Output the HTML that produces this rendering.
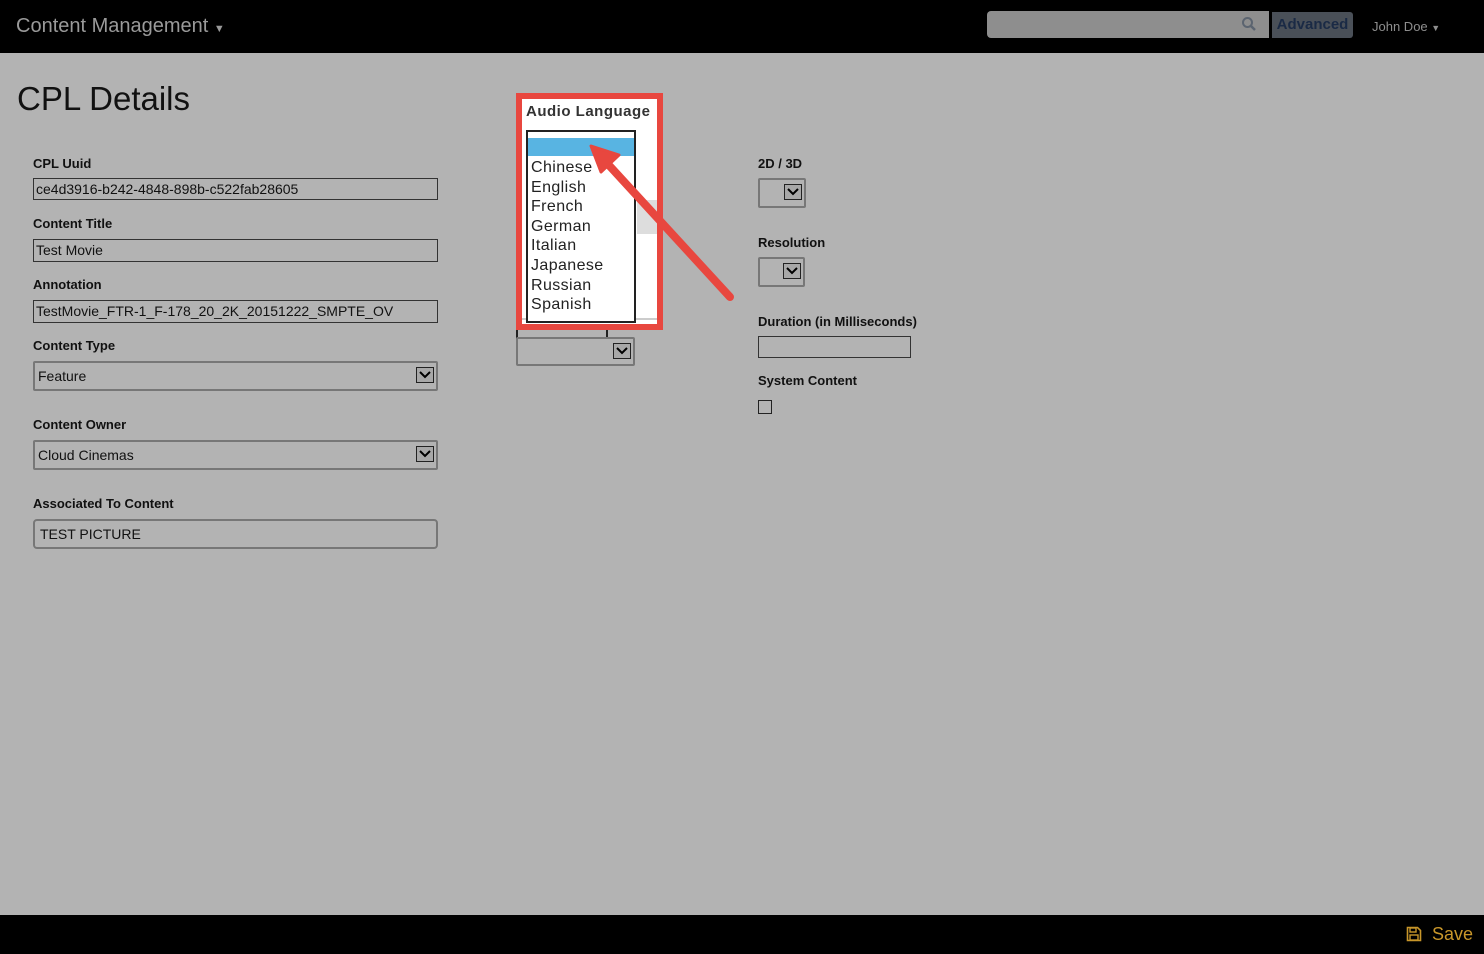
<!DOCTYPE html><html><head><style>
body{margin:0;width:1484px;height:954px;background:#b3b3b3;font-family:"Liberation Sans",sans-serif;position:relative;overflow:hidden}
.a{position:absolute}
.lbl{position:absolute;font-size:13px;font-weight:bold;color:#111}
.inp{position:absolute;border:1px solid #333;background:#b3b3b3;font-size:14px;line-height:20px;padding-left:2px;box-sizing:border-box;color:#111}
.sel{position:absolute;border:2px solid #777;border-radius:2px;background:#b3b3b3;font-size:14px;box-sizing:border-box;color:#111;padding-left:3px}
.dd{position:absolute;right:2px;top:50%;margin-top:-9px;width:18px;height:16px;border:1px solid #222;background:#a8a8a8;box-sizing:border-box}
.dd svg{position:absolute;left:2px;top:2px}
</style></head><body>
<div class="a" style="left:0;top:0;width:1484px;height:53px;background:#000"></div>
<div class="a" style="left:16px;top:15px;color:#9a9a9a;font-size:20px">Content Management <span style="font-size:11px">▼</span></div>
<div class="a" style="left:987px;top:11px;width:282px;height:27px;background:#8e8e8e;border-radius:4px 0 0 4px"></div>
<svg class="a" style="left:1241px;top:16px" width="16" height="16"><circle cx="6.5" cy="6.5" r="4.5" stroke="#5b6470" stroke-width="2" fill="none"/><path d="M10 10l4 4" stroke="#5b6470" stroke-width="2.5"/></svg>
<div class="a" style="left:1272px;top:12px;width:81px;height:26px;background:#4a5058;border-radius:0 3px 3px 0;color:#1a2a45;font-weight:bold;font-size:15px;line-height:26px;text-align:center">Advanced</div>
<div class="a" style="left:1372px;top:19px;color:#8e8e8e;font-size:13px">John Doe <span style="font-size:9px">▼</span></div>

<div class="a" style="left:17px;top:80px;font-size:33px;color:#111">CPL Details</div>
<div class="lbl" style="left:33px;top:156px">CPL Uuid</div>
<div class="inp" style="left:33px;top:178px;width:405px;height:22px">ce4d3916-b242-4848-898b-c522fab28605</div>
<div class="lbl" style="left:33px;top:216px">Content Title</div>
<div class="inp" style="left:33px;top:239px;width:405px;height:23px">Test Movie</div>
<div class="lbl" style="left:33px;top:277px">Annotation</div>
<div class="inp" style="left:33px;top:300px;width:405px;height:23px">TestMovie_FTR-1_F-178_20_2K_20151222_SMPTE_OV</div>
<div class="lbl" style="left:33px;top:338px">Content Type</div>
<div class="sel" style="left:33px;top:361px;width:405px;height:30px;line-height:26px">Feature<div class="dd"><svg width="12" height="10"><path d="M1 2l5 5 5-5" stroke="#000" stroke-width="2" fill="none"/></svg></div></div>
<div class="lbl" style="left:33px;top:417px">Content Owner</div>
<div class="sel" style="left:33px;top:440px;width:405px;height:30px;line-height:26px">Cloud Cinemas<div class="dd"><svg width="12" height="10"><path d="M1 2l5 5 5-5" stroke="#000" stroke-width="2" fill="none"/></svg></div></div>
<div class="lbl" style="left:33px;top:496px">Associated To Content</div>
<div class="sel" style="left:33px;top:519px;width:405px;height:30px;line-height:26px;border-radius:4px;padding-left:5px">TEST PICTURE</div>

<div class="a" style="left:516px;top:325px;width:92px;height:14px;border:2px solid #222;border-top:none;box-sizing:border-box"></div>
<div class="sel" style="left:516px;top:337px;width:119px;height:29px"><div class="dd"><svg width="12" height="10"><path d="M1 2l5 5 5-5" stroke="#000" stroke-width="2" fill="none"/></svg></div></div>

<div class="a" style="left:516px;top:93px;width:147px;height:237px;background:#e8473f"></div>
<div class="a" style="left:522px;top:99px;width:135px;height:225px;background:#fff"></div>
<div class="a" style="left:637px;top:200px;width:20px;height:34px;background:#ddd"></div>
<div class="a" style="left:522px;top:318px;width:135px;height:2px;background:#ccc"></div>
<div class="a" style="left:526px;top:103px;font-size:15px;font-weight:bold;color:#333;letter-spacing:0.5px">Audio Language</div>
<div class="a" style="left:526px;top:130px;width:110px;height:193px;border:2px solid #222;box-sizing:border-box;background:#fff">
<div style="margin-top:6px;height:18px;background:#58b4e2"></div>
<div style="padding-left:3px;padding-top:2px;font-size:16px;line-height:19.6px;color:#222;letter-spacing:0.4px">Chinese<br>English<br>French<br>German<br>Italian<br>Japanese<br>Russian<br>Spanish</div></div>
<svg class="a" style="left:0;top:0" width="1484" height="954"><path d="M730 297L606 162" stroke="#e8473f" stroke-width="8" stroke-linecap="round"/><path d="M591 146l28 9-18 17z" fill="#e8473f" stroke="#e8473f" stroke-width="3" stroke-linejoin="round"/></svg>

<div class="lbl" style="left:758px;top:156px">2D / 3D</div>
<div class="sel" style="left:758px;top:178px;width:48px;height:30px"><div class="dd"><svg width="12" height="10"><path d="M1 2l5 5 5-5" stroke="#000" stroke-width="2" fill="none"/></svg></div></div>
<div class="lbl" style="left:758px;top:235px">Resolution</div>
<div class="sel" style="left:758px;top:257px;width:47px;height:30px"><div class="dd"><svg width="12" height="10"><path d="M1 2l5 5 5-5" stroke="#000" stroke-width="2" fill="none"/></svg></div></div>
<div class="lbl" style="left:758px;top:314px">Duration (in Milliseconds)</div>
<div class="inp" style="left:758px;top:336px;width:153px;height:22px"></div>
<div class="lbl" style="left:758px;top:373px">System Content</div>
<div class="a" style="left:758px;top:400px;width:14px;height:14px;border:1px solid #222;box-sizing:border-box"></div>

<div class="a" style="left:0;top:915px;width:1484px;height:39px;background:#000"></div>
<svg class="a" style="left:1406px;top:926px" width="16" height="16"><path d="M1.5 1.5h10l3 3v10h-13z" stroke="#c8962a" stroke-width="1.6" fill="none"/><rect x="4" y="2" width="6" height="4" stroke="#c8962a" stroke-width="1.4" fill="none"/><rect x="4" y="9" width="8" height="5" stroke="#c8962a" stroke-width="1.4" fill="none"/></svg>
<div class="a" style="left:1432px;top:924px;color:#c8962a;font-size:18px">Save</div>
</body></html>
